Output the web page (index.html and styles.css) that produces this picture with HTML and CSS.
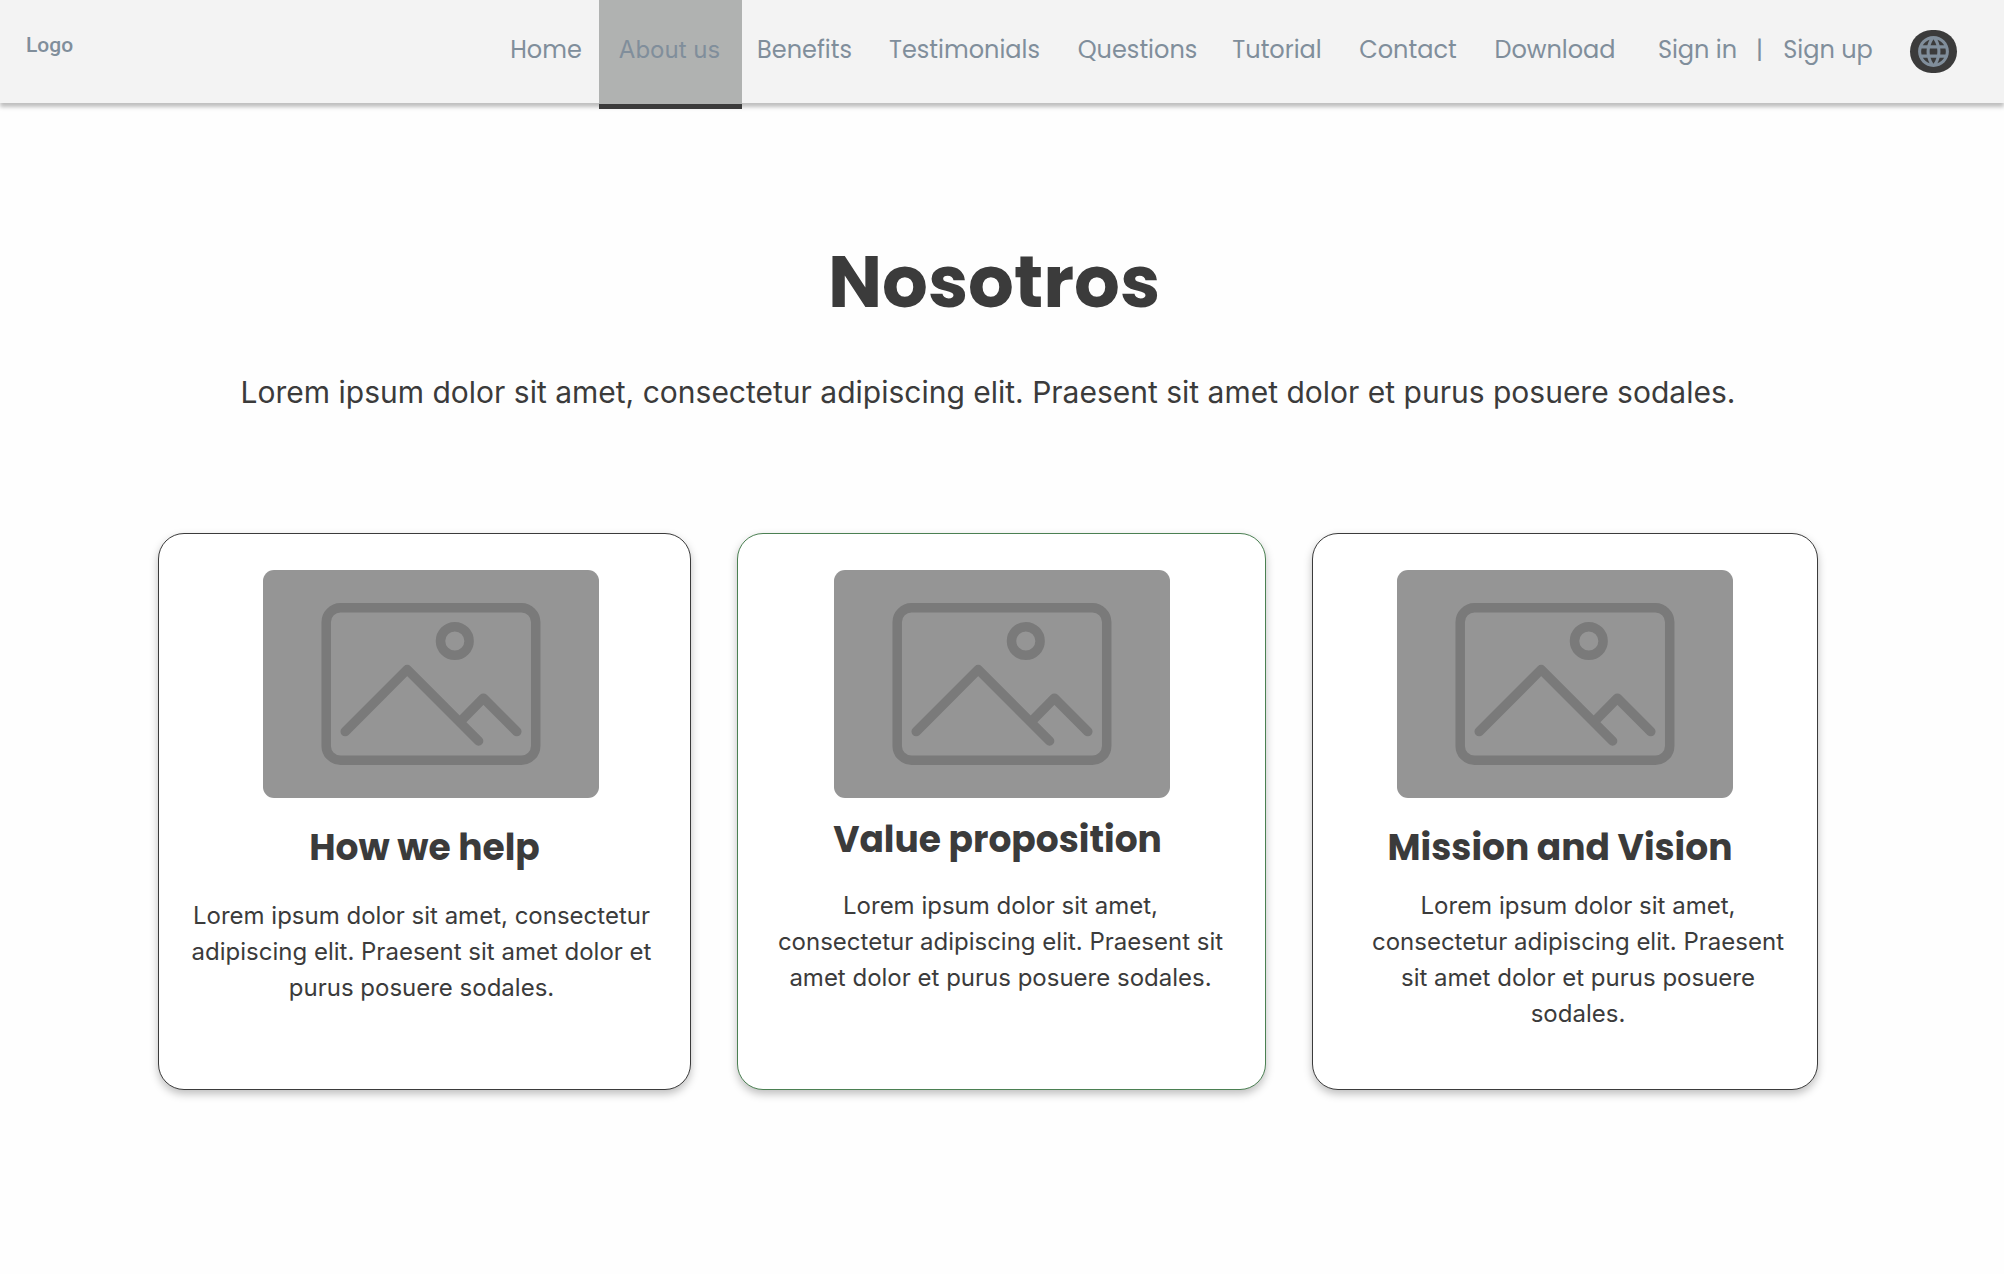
FILE: index.html
```html
<!DOCTYPE html>
<html lang="en">
<head>
<meta charset="utf-8">
<meta name="viewport" content="width=device-width, initial-scale=1">
<title>Nosotros</title>
<link rel="stylesheet" href="styles.css">
</head>
<body>
<svg class="sprite" aria-hidden="true">
  <symbol id="picture" viewBox="0 0 336 228">
    <g fill="none" stroke="#7a7a7a" stroke-width="9.5" stroke-linecap="round" stroke-linejoin="round">
      <rect x="63.2" y="37.8" width="209.5" height="152.4" rx="14.3"/>
      <circle cx="191.8" cy="71" r="14.3"/>
      <path d="M82.2 161.6 144.2 99.5 215.6 171M197 151.8 220.4 128.2 253.8 161.6"/>
    </g>
  </symbol>
</svg>
<header class="header">
  <a class="logo" href="#">Logo</a>
  <nav class="nav" aria-label="Main">
    <a class="nav-link" href="#">Home</a>
    <a class="nav-link nav-link-active" href="#" aria-current="page">About us</a>
    <a class="nav-link" href="#">Benefits</a>
    <a class="nav-link" href="#">Testimonials</a>
    <a class="nav-link" href="#">Questions</a>
    <a class="nav-link" href="#">Tutorial</a>
    <a class="nav-link" href="#">Contact</a>
    <a class="nav-link" href="#">Download</a>
  </nav>
  <div class="account">
    <a class="nav-link" href="#">Sign in</a>
    <span class="nav-link">|</span>
    <a class="nav-link" href="#">Sign up</a>
  </div>
  <button class="language" type="button" aria-label="Language">
    <svg class="globe" viewBox="0 0 24 24" aria-hidden="true"><path fill="currentColor" d="M11.99 2C6.47 2 2 6.48 2 12s4.47 10 9.99 10C17.52 22 22 17.52 22 12S17.52 2 11.99 2zm6.93 6h-2.95c-.32-1.25-.78-2.45-1.38-3.56 1.84.63 3.37 1.91 4.33 3.56zM12 4.04c.83 1.2 1.48 2.53 1.91 3.96h-3.82c.43-1.43 1.08-2.76 1.91-3.96zM4.26 14C4.1 13.36 4 12.69 4 12s.1-1.36.26-2h3.38c-.08.66-.14 1.32-.14 2 0 .68.06 1.34.14 2H4.26zm.82 2h2.95c.32 1.25.78 2.45 1.38 3.56-1.84-.63-3.37-1.9-4.33-3.56zm2.95-8H5.08c.96-1.66 2.49-2.93 4.33-3.56C8.81 5.55 8.35 6.75 8.03 8zM12 19.96c-.83-1.2-1.48-2.53-1.91-3.96h3.82c-.43 1.43-1.08 2.76-1.91 3.96zM14.34 14H9.66c-.09-.66-.16-1.32-.16-2 0-.68.07-1.35.16-2h4.68c.09.65.16 1.32.16 2 0 .68-.07 1.34-.16 2zm.25 5.56c.6-1.11 1.06-2.31 1.38-3.56h2.95c-.96 1.65-2.49 2.93-4.33 3.56zM16.36 14c.08-.66.14-1.32.14-2 0-.68-.06-1.34-.14-2h3.38c.16.64.26 1.31.26 2s-.1 1.36-.26 2h-3.38z"/></svg>
  </button>
</header>
<main class="main">
  <h1 class="title">Nosotros</h1>
  <p class="lead">Lorem ipsum dolor sit amet, consectetur adipiscing elit. Praesent sit amet dolor et purus posuere sodales.</p>
  <section class="cards">
    <article class="card card-help">
      <svg class="picture" role="img" aria-label="Picture placeholder"><use href="#picture"/></svg>
      <h2 class="card-title">How we help</h2>
      <p class="card-text">Lorem ipsum dolor sit amet, consectetur adipiscing elit. Praesent sit amet dolor et purus posuere sodales.</p>
    </article>
    <article class="card card-value">
      <svg class="picture" role="img" aria-label="Picture placeholder"><use href="#picture"/></svg>
      <h2 class="card-title">Value proposition</h2>
      <p class="card-text">Lorem ipsum dolor sit amet, consectetur adipiscing elit. Praesent sit amet dolor et purus posuere sodales.</p>
    </article>
    <article class="card card-mission">
      <svg class="picture" role="img" aria-label="Picture placeholder"><use href="#picture"/></svg>
      <h2 class="card-title">Mission and Vision</h2>
      <p class="card-text">Lorem ipsum dolor sit amet, consectetur adipiscing elit. Praesent sit amet dolor et purus posuere sodales.</p>
    </article>
  </section>
</main>
</body>
</html>
```
FILE: styles.css
```css
* {
  box-sizing: border-box;
}

body {
  margin: 0;
  background: #fefefe;
  color: #3b3b3b;
  font-family: Inter, "Liberation Sans", sans-serif;
}

h1, h2, p {
  margin: 0;
}

a {
  color: inherit;
  text-decoration: none;
}

.sprite {
  display: none;
}

.header {
  display: flex;
  height: 103px;
  padding: 0 47px 0 26px;
  background: #f3f3f3;
  box-shadow: 0 4px 4px rgba(0, 0, 0, 0.25);
  color: #808e9b;
}

.logo {
  margin: 33px auto 0 0;
  font: 500 21px/24px Roboto, sans-serif;
}

.nav {
  display: grid;
  grid-template-columns: 106px 143px 125px 195px 151px 128px 134px 160px;
}

.account {
  display: grid;
  grid-template-columns: 107px 17px 120px;
  margin: 0 22px 0 9px;
}

.nav-link {
  height: 109px;
  padding-top: 32px;
  font-family: Poppins, Inter, sans-serif;
  font-size: 24px;
  line-height: 36px;
  text-align: center;
  white-space: nowrap;
}

.nav-link-active {
  padding-right: 2px;
  border-bottom: 5px solid #3b3b3b;
  background: #b0b2b1;
  font-family: Inter, sans-serif;
}

.language {
  display: grid;
  place-items: center;
  width: 47px;
  height: 43px;
  margin: 30px 0 0;
  padding: 0;
  border: 0;
  border-radius: 22px;
  background: #3b3b3b;
  color: #808e9b;
}

.globe {
  width: 37px;
  height: 37px;
}

.main {
  padding: 125px 186px 180px 158px;
}

.title {
  padding-left: 12px;
  font-family: Poppins, Inter, sans-serif;
  font-size: 72px;
  font-weight: 700;
  line-height: 108px;
  text-align: center;
}

.lead {
  margin-top: 33px;
  font-size: 30px;
  line-height: 46px;
  text-align: center;
}

.cards {
  display: grid;
  grid-template-columns: 533fr 529fr 506fr;
  gap: 46px;
  margin-top: 118px;
}

.card {
  display: flex;
  flex-direction: column;
  align-items: center;
  min-height: 557px;
  padding: 36px 30px 46px;
  border: 1px solid #3b3b3b;
  border-radius: 26px;
  background: #fff;
  box-shadow: 0 4px 8px rgba(0, 0, 0, 0.25);
  text-align: center;
}

.picture {
  flex: none;
  width: 336px;
  height: 228px;
  border-radius: 11px;
  background: #959595;
}

.card-title {
  margin-top: 23px;
  font-family: Poppins, Inter, sans-serif;
  font-size: 36px;
  font-weight: 700;
  line-height: 54px;
  white-space: nowrap;
}

.card-text {
  margin-top: 23px;
  font-size: 24px;
  line-height: 36px;
}

.card-help .picture {
  margin-left: 12px;
}

.card-help .card-text {
  padding-right: 6px;
}

.card-value {
  border-color: #4b8052;
}

.card-value .card-title {
  margin-top: 15px;
  padding-right: 8px;
}

.card-value .card-text {
  margin-top: 21px;
  padding: 0 10px 0 8px;
}

.card-mission .card-title {
  padding-right: 10px;
}

.card-mission .card-text {
  margin-top: 13px;
  padding-left: 26px;
}
```
